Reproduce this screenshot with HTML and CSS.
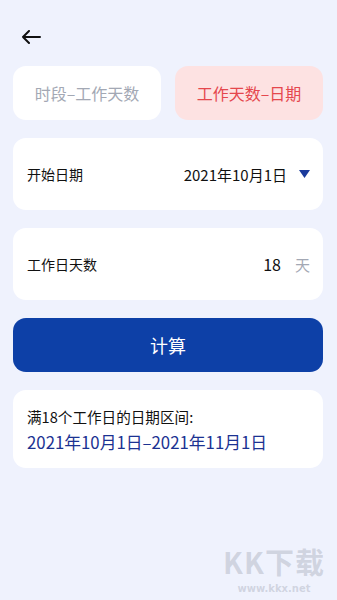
FILE: index.html
```html
<!DOCTYPE html>
<html lang="zh">
<head>
<meta charset="utf-8">
<link rel="stylesheet" href="styles.css">
</head>
<body>
<div class="page">
  <div class="topbar">
    <svg class="back" width="20" height="14" viewBox="0 0 20 14"><path d="M19 7H2M8 1L2 7l6 6" fill="none" stroke="#111" stroke-width="2" stroke-linecap="round" stroke-linejoin="round"/></svg>
  </div>
  <div class="tabs">
    <div class="tab">时段–工作天数</div>
    <div class="tab active">工作天数–日期</div>
  </div>
  <div class="card row">
    <span class="label">开始日期</span>
    <span class="value date">2021年10月1日<svg class="tri" width="11" height="8" viewBox="0 0 11 8"><path d="M0 0h11L5.5 8z" fill="#1a3a9c"/></svg></span>
  </div>
  <div class="card row">
    <span class="label">工作日天数</span>
    <span class="value">18<span class="unit">天</span></span>
  </div>
  <div class="btn">计算</div>
  <div class="card result">
    <div class="rtitle">满18个工作日的日期区间:</div>
    <div class="rval">2021年10月1日–2021年11月1日</div>
  </div>
</div>
<div class="wm">
  <div class="wm-big">KK下载</div>
  <div class="wm-small">www.kkx.net</div>
</div>
</body>
</html>
```
FILE: styles.css
```css
* { box-sizing: border-box; margin: 0; padding: 0; }
html, body { width: 337px; height: 600px; overflow: hidden; }
body {
  background: #eff2fd;
  font-family: "Noto Sans CJK SC", "Noto Sans", sans-serif;
  color: #111;
  position: relative;
}
.page { padding: 0 14px 0 13px; }
.topbar { height: 66px; padding-top: 30px; padding-left: 8px; }
.back { display: block; }
.tabs { display: flex; gap: 14px; }
.tab {
  flex: 1;
  height: 54px;
  border-radius: 13px;
  background: #fff;
  color: #a3a8b4;
  font-size: 16px;
  display: flex;
  align-items: center;
  justify-content: center;
}
.tab.active { background: #fde2e2; color: #e5474d; }
.card { background: #fff; border-radius: 13px; }
.row {
  height: 72px;
  margin-top: 18px;
  display: flex;
  align-items: center;
  justify-content: space-between;
  padding: 0 13px 0 14px;
}
.label { font-size: 14px; }
.value { font-size: 16px; display: flex; align-items: center; }
.value.date { font-size: 15px; }
.tri { margin-left: 12px; }
.unit { color: #a3a8b4; margin-left: 14px; font-size: 15px; }
.btn {
  margin-top: 18px;
  height: 54px;
  border-radius: 13px;
  background: #0d40a7;
  color: #fff;
  font-size: 18px;
  display: flex;
  align-items: center;
  justify-content: center;
}
.result { margin-top: 18px; height: 78px; padding: 17px 14px 0; }
.rtitle { font-size: 14.6px; line-height: 20px; }
.rval { font-size: 16.8px; color: #1b3292; line-height: 24px; margin-top: 3px; }
.wm {
  position: absolute;
  left: 220px;
  top: 544px;
  color: rgba(150,155,170,0.35);
  text-align: center;
  width: 108px;
}
.wm-big { font-size: 29px; font-weight: 700; line-height: 34px; letter-spacing: 1px; }
.wm-small { font-size: 10px; font-weight: 700; line-height: 12px; margin-top: 5px; font-family: "DejaVu Sans", sans-serif; }
```
